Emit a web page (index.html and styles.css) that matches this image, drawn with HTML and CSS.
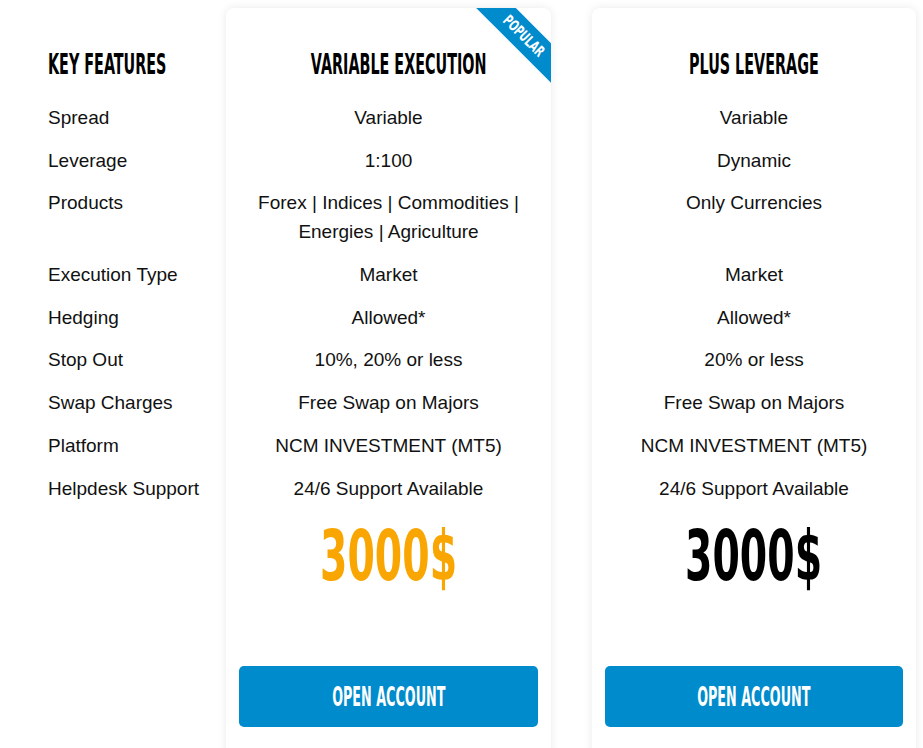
FILE: index.html
```html
<!DOCTYPE html>
<html lang="en">
<head>
<meta charset="utf-8">
<title>Account Types</title>
<link rel="stylesheet" href="styles.css">
</head>
<body>
<div class="pricing">
  <div class="features">
    <h2 class="title title-left"><span>KEY FEATURES</span></h2>
    <ul class="rows">
      <li>Spread</li>
      <li>Leverage</li>
      <li class="double">Products</li>
      <li>Execution Type</li>
      <li>Hedging</li>
      <li>Stop Out</li>
      <li>Swap Charges</li>
      <li>Platform</li>
      <li>Helpdesk Support</li>
    </ul>
  </div>

  <div class="card">
    <div class="ribbon"><span>POPULAR</span></div>
    <h2 class="title"><span>VARIABLE EXECUTION</span></h2>
    <ul class="rows">
      <li>Variable</li>
      <li>1:100</li>
      <li class="double">Forex | Indices | Commodities | Energies | Agriculture</li>
      <li>Market</li>
      <li>Allowed*</li>
      <li>10%, 20% or less</li>
      <li>Free Swap on Majors</li>
      <li>NCM INVESTMENT (MT5)</li>
      <li>24/6 Support Available</li>
    </ul>
    <div class="price price-orange"><span>3000$</span></div>
    <a class="btn" href="#"><span>OPEN ACCOUNT</span></a>
  </div>

  <div class="card card-second">
    <h2 class="title"><span>PLUS LEVERAGE</span></h2>
    <ul class="rows">
      <li>Variable</li>
      <li>Dynamic</li>
      <li class="double">Only Currencies</li>
      <li>Market</li>
      <li>Allowed*</li>
      <li>20% or less</li>
      <li>Free Swap on Majors</li>
      <li>NCM INVESTMENT (MT5)</li>
      <li>24/6 Support Available</li>
    </ul>
    <div class="price"><span>3000$</span></div>
    <a class="btn" href="#"><span>OPEN ACCOUNT</span></a>
  </div>
</div>
</body>
</html>
```

FILE: styles.css
```css
* { box-sizing: border-box; }
html, body { margin: 0; padding: 0; background: #fff; }
body {
  font-family: "Liberation Sans", Arial, sans-serif;
  color: #111;
  overflow: hidden;
  height: 748px;
}
.pricing {
  display: flex;
  align-items: flex-start;
  padding: 8px 0 0 48px;
}
.features {
  width: 178px;
  flex: none;
  padding-top: 38px;
}
.card {
  position: relative;
  overflow: hidden;
  width: 325px;
  flex: none;
  background: #fff;
  border-radius: 8px;
  box-shadow: 0 0 10px rgba(0, 0, 0, 0.09);
  padding: 38px 13px 60px;
  text-align: center;
}
.card-second {
  width: 324px;
  margin-left: 41px;
}
.title {
  margin: 0 0 21px;
  height: 36px;
  font-family: "DejaVu Sans Condensed", "Liberation Sans", sans-serif;
  font-weight: 700;
  font-size: 29px;
  line-height: 36px;
  color: #000;
  white-space: nowrap;
}
.title span {
  display: inline-block;
  transform: scaleX(0.55);
  transform-origin: center;
}
.title-left span { transform-origin: left; }
.rows {
  list-style: none;
  margin: 0;
  padding: 0;
}
.rows li {
  font-size: 19px;
  line-height: 29px;
  margin-bottom: 13.7px;
}
.rows li.double { min-height: 58px; }
.price {
  height: 80px;
  font-family: "DejaVu Sans Condensed", "Liberation Sans", sans-serif;
  font-weight: 700;
  font-size: 70px;
  line-height: 80px;
  color: #000;
}
.price span {
  display: inline-block;
  transform: scaleX(0.625);
}
.price-orange { color: #f9a602; }
.btn {
  display: flex;
  align-items: center;
  justify-content: center;
  height: 61px;
  margin-top: 70px;
  border-radius: 5px;
  background: #008bcc;
  color: #fff;
  text-decoration: none;
  font-family: "DejaVu Sans Condensed", "Liberation Sans", sans-serif;
  font-weight: 700;
  font-size: 26.5px;
}
.btn span {
  display: inline-block;
  transform: scaleX(0.535);
  white-space: nowrap;
}
.ribbon {
  position: absolute;
  top: 14px;
  right: -38px;
  width: 130px;
  height: 28px;
  background: #008bcc;
  transform: rotate(45deg);
  color: #fff;
  text-align: center;
  font-family: "DejaVu Sans Condensed", "Liberation Sans", sans-serif;
  font-weight: 700;
  font-size: 15px;
  line-height: 28px;
}
.ribbon span {
  display: inline-block;
  transform: scaleX(0.72);
}
```
